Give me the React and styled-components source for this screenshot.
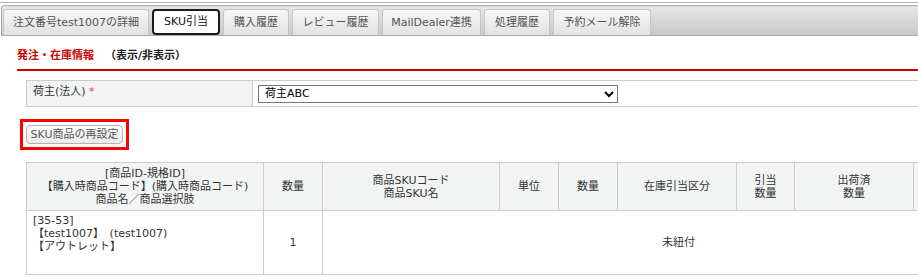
import React from "react";
import styled, { createGlobalStyle, css } from "styled-components";

const GlobalStyle = createGlobalStyle`
  html, body {
    margin: 0;
    overflow: hidden;
    background: #fff;
  }
  body {
    font-family: "DejaVu Sans", "Noto Sans CJK JP", sans-serif;
    font-size: 11px;
    color: #333;
  }
`;

const tabs = [
  { label: "注文番号test1007の詳細", width: 146 },
  { label: "SKU引当", width: 68, active: true },
  { label: "購入履歴", width: 66 },
  { label: "レビュー履歴", width: 87 },
  { label: "MailDealer連携", width: 99 },
  { label: "処理履歴", width: 66 },
  { label: "予約メール解除", width: 98 },
];

const App = () => {
  return (
    <Frame>
      <GlobalStyle />
      <TabBar>
        {tabs.map((t) => (
          <Tab key={t.label} $active={t.active} $width={t.width}>
            {t.label}
          </Tab>
        ))}
      </TabBar>

      <Section>
        <Heading>
          <RedTitle>発注・在庫情報</RedTitle>
          <Toggle>（表示/非表示）</Toggle>
        </Heading>

        <Body>
          <FormTable>
            <tbody>
              <tr>
                <Label>
                  荷主(法人) <Required>*</Required>
                </Label>
                <Field>
                  <Select defaultValue="abc">
                    <option value="abc">荷主ABC</option>
                  </Select>
                </Field>
              </tr>
            </tbody>
          </FormTable>

          <ButtonRow>
            <Highlight>
              <ResetButton>SKU商品の再設定</ResetButton>
            </Highlight>
          </ButtonRow>

          <SkuTable>
            <colgroup>
              <col style={{ width: 237 }} />
              <col style={{ width: 59 }} />
              <col style={{ width: 177 }} />
              <col style={{ width: 59 }} />
              <col style={{ width: 59 }} />
              <col style={{ width: 119 }} />
              <col style={{ width: 58 }} />
              <col style={{ width: 119 }} />
              <col style={{ width: 121 }} />
            </colgroup>
            <thead>
              <tr>
                <Th>
                  [商品ID-規格ID]
                  <br />
                  【購入時商品コード】(購入時商品コード)
                  <br />
                  商品名／商品選択肢
                </Th>
                <Th>数量</Th>
                <Th>
                  商品SKUコード
                  <br />
                  商品SKU名
                </Th>
                <Th>単位</Th>
                <Th>数量</Th>
                <Th>在庫引当区分</Th>
                <Th>
                  引当
                  <br />
                  数量
                </Th>
                <Th>
                  出荷済
                  <br />
                  数量
                </Th>
                <Th />
              </tr>
            </thead>
            <tbody>
              <tr>
                <Td $left>
                  [35-53]
                  <br />
                  【test1007】　(test1007)
                  <br />
                  【アウトレット】
                </Td>
                <Td>1</Td>
                <Td colSpan={7}>未紐付</Td>
              </tr>
            </tbody>
          </SkuTable>
        </Body>
      </Section>
    </Frame>
  );
};

const Frame = styled.div`
  margin-top: 2px;
  border-top: 1px solid #b0b0b0;
  padding-top: 2px;
`;

const TabBar = styled.div`
  display: flex;
  align-items: flex-end;
  gap: 3px;
  margin-left: 1px;
  padding: 3px 0 0 1px;
  box-sizing: border-box;
  height: 31px;
  border: 1px solid #a9a9a9;
  border-right: none;
  border-radius: 4px 0 0 0;
  background: linear-gradient(#e6e6e6, #c9c9c9);
`;

const Tab = styled.div`
  display: flex;
  align-items: center;
  justify-content: center;
  width: ${(p) => p.$width}px;
  height: 26px;
  padding: 0;
  box-sizing: border-box;
  border: 1px solid #c6c6c6;
  border-bottom: none;
  border-radius: 3px 3px 0 0;
  background: linear-gradient(#f6f6f6, #e2e2e2);
  color: #555;
  line-height: 14px;
  white-space: nowrap;
  ${(p) =>
    p.$active &&
    css`
      border: 2px solid #1c1c1c;
      border-radius: 4px;
      background: #fff;
      color: #111;
    `}
`;

const Section = styled.div`
  padding-left: 17px;
`;

const Heading = styled.div`
  margin-top: 12px;
  line-height: 16px;
  padding-bottom: 5px;
  border-bottom: 2px solid #d00000;
  font-weight: bold;
`;

const RedTitle = styled.span`
  color: #cc0000;
`;

const Toggle = styled.span`
  margin-left: 11px;
  color: #222;
`;

const Body = styled.div`
  padding-left: 9px;
`;

const FormTable = styled.table`
  margin-top: 9px;
  width: calc(100% + 20px);
  border-collapse: collapse;
  table-layout: fixed;
`;

const Label = styled.td`
  width: 226px;
  height: 26px;
  box-sizing: border-box;
  padding: 4px 6px 0;
  vertical-align: top;
  line-height: 14px;
  background: #f2f4f3;
  border: 1px solid #cccccc;
  color: #333;
`;

const Required = styled.span`
  color: #ff3b3b;
`;

const Field = styled.td`
  padding: 0 5px;
  border: 1px solid #cccccc;
  vertical-align: middle;
`;

const Select = styled.select`
  display: block;
  width: 360px;
  height: 18px;
  padding: 0 2px;
  font-family: "DejaVu Sans", "Noto Sans CJK JP", sans-serif;
  font-size: 11px;
  color: #000;
  background: #fff;
  border: 1px solid #767676;
  border-radius: 0;
`;

const ButtonRow = styled.div`
  display: flex;
  margin-top: 12px;
  margin-left: -6px;
`;

const Highlight = styled.div`
  display: flex;
  padding: 3px;
  border: 3px solid #ff0000;
`;

const ResetButton = styled.button`
  height: 19px;
  width: 97px;
  padding: 0;
  font-family: "DejaVu Sans", "Noto Sans CJK JP", sans-serif;
  font-size: 11px;
  line-height: 14px;
  color: #555;
  background: linear-gradient(#fdfdfd, #e9e9e9);
  border: 1px solid #b4b4b4;
  border-radius: 4px;
`;

const SkuTable = styled.table`
  margin-top: 12px;
  width: 1008px;
  border-collapse: collapse;
  table-layout: fixed;
`;

const Th = styled.th`
  height: 47px;
  padding: 0 2px;
  font-weight: normal;
  text-align: center;
  line-height: 13px;
  color: #333;
  background: #f2f4f3;
  border: 1px solid #cccccc;
  white-space: nowrap;
`;

const Td = styled.td`
  height: 60px;
  padding: 0 6px;
  text-align: center;
  vertical-align: middle;
  line-height: 13px;
  border: 1px solid #cccccc;
  color: #333;
  ${(p) =>
    p.$left &&
    css`
      text-align: left;
      vertical-align: top;
      padding-top: 3px;
    `}
`;

export default App;
